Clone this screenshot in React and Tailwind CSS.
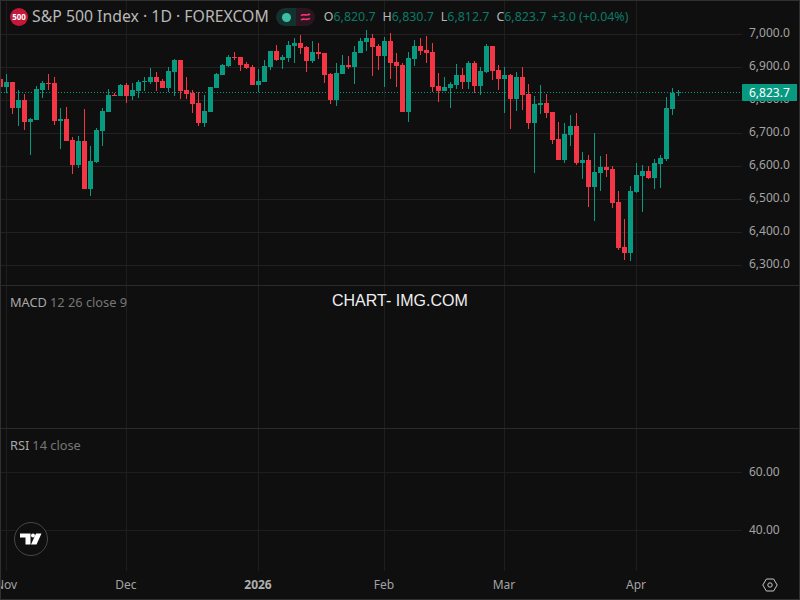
import React from "react";

const G = "#089981";
const R = "#f23645";

// candles in 1/3 px, read off the chart: [color, wickTop, bodyTop, bodyBottom, wickBottom]
const candles = [
  [R, 237, 237, 261, 261], [G, 222, 246, 261, 278], [R, 246, 246, 324, 342], [G, 270, 300, 324, 378],
  [R, 282, 300, 366, 390], [G, 354, 358, 366, 465], [G, 258, 267, 360, 360], [G, 243, 249, 270, 294],
  [R, 222, 249, 252, 270], [R, 231, 249, 363, 375], [G, 324, 357, 362, 447], [R, 321, 357, 423, 423],
  [R, 411, 420, 495, 522], [G, 408, 423, 495, 504], [R, 327, 423, 567, 567], [G, 438, 483, 567, 588],
  [G, 384, 390, 486, 489], [G, 324, 333, 393, 438], [G, 267, 285, 336, 336], [R, 279, 284, 287, 288],
  [G, 252, 255, 288, 288], [R, 249, 255, 288, 309], [G, 249, 270, 288, 300], [G, 240, 246, 273, 294],
  [G, 231, 243, 246, 273], [G, 204, 231, 246, 252], [R, 216, 231, 246, 273], [R, 237, 243, 264, 264],
  [G, 201, 213, 264, 276], [G, 177, 180, 216, 288], [R, 180, 180, 273, 297], [R, 231, 270, 282, 297],
  [R, 270, 279, 312, 339], [R, 276, 309, 369, 378], [G, 285, 333, 369, 381], [G, 261, 261, 336, 336],
  [G, 219, 222, 264, 264], [G, 192, 195, 225, 225], [G, 165, 171, 198, 201], [R, 156, 171, 174, 180],
  [R, 171, 171, 195, 213], [R, 186, 192, 204, 207], [R, 195, 201, 255, 255], [G, 207, 243, 255, 276],
  [G, 180, 198, 246, 246], [G, 153, 153, 201, 210], [R, 135, 153, 180, 183], [G, 165, 171, 180, 207],
  [G, 123, 135, 174, 186], [G, 114, 129, 138, 189], [R, 105, 129, 144, 162], [R, 138, 141, 183, 216],
  [G, 123, 156, 183, 189], [R, 129, 156, 162, 177], [R, 159, 159, 225, 249], [R, 219, 222, 300, 312],
  [G, 189, 219, 300, 318], [G, 165, 195, 222, 222], [R, 168, 195, 201, 207], [G, 138, 156, 201, 252],
  [G, 114, 123, 159, 159], [G, 90, 114, 126, 153], [R, 102, 114, 141, 228], [R, 132, 138, 168, 210],
  [G, 111, 123, 168, 261], [R, 99, 123, 189, 237], [R, 159, 186, 198, 261], [R, 189, 195, 336, 336],
  [G, 156, 174, 336, 366], [G, 120, 138, 177, 198], [R, 114, 138, 153, 165], [R, 108, 150, 159, 189],
  [R, 129, 156, 261, 276], [R, 219, 258, 273, 306], [G, 231, 261, 273, 274], [G, 246, 252, 264, 324],
  [G, 192, 225, 255, 267], [R, 204, 225, 246, 267], [G, 183, 189, 246, 267], [R, 183, 189, 258, 279],
  [G, 201, 213, 258, 285], [G, 132, 138, 216, 219], [R, 138, 138, 213, 240], [R, 195, 210, 237, 270],
  [G, 201, 225, 237, 339], [R, 222, 225, 297, 387], [G, 216, 231, 297, 333], [R, 200, 231, 285, 330],
  [R, 252, 282, 369, 387], [G, 288, 312, 369, 519], [G, 255, 309, 315, 342], [R, 282, 309, 339, 354],
  [R, 336, 336, 420, 432], [R, 366, 417, 480, 480], [G, 369, 402, 480, 489], [G, 345, 378, 405, 438],
  [R, 339, 378, 489, 495], [G, 456, 480, 489, 537], [R, 465, 480, 561, 621], [G, 399, 516, 561, 663],
  [G, 468, 501, 519, 573], [R, 462, 501, 510, 531], [R, 498, 507, 609, 624], [R, 573, 606, 744, 750],
  [R, 657, 741, 759, 780], [G, 558, 573, 759, 783], [G, 489, 525, 576, 579], [G, 495, 513, 528, 636],
  [R, 498, 513, 534, 537], [G, 477, 489, 534, 567], [G, 465, 474, 492, 564], [G, 291, 324, 477, 483],
  [G, 264, 279, 327, 345], [G, 270, 276, 279, 288],
];

const monthLines = [6, 126, 258, 384, 504, 636];
const priceLines = [34, 67, 100, 133, 166, 199, 232, 265];
const priceLabels = ["7,000.0", "6,900.0", "6,800.0", "6,700.0", "6,600.0", "6,500.0", "6,400.0", "6,300.0"];

const MonthGrid = ({ top, height }) =>
  monthLines.map((x) => (
    <rect key={x} x={x} y={top} width="1" height={height} fill="#1e1e1e" />
  ));

const App = () => {
  return (
    <div className="w-[800px] h-[600px] bg-[#0f0f0f] border border-[#303030] flex flex-col overflow-hidden font-['Noto_Sans',sans-serif] text-[12px] text-[#a3a3a3]">
      {/* Price pane */}
      <div className="h-[285px] shrink-0 flex border-b border-[#2a2a2a] relative">
        <svg className="w-[741px] h-[284px] shrink-0" viewBox="1 1 741 284" shapeRendering="crispEdges">
          <MonthGrid top={1} height={284} />
          {priceLines.map((y) => (
            <rect key={y} x="1" y={y} width="741" height="1" fill="#212121" />
          ))}
          <line x1="1" y1="92.5" x2="742" y2="92.5" stroke={G} strokeDasharray="1 2" />
          {candles.map((c, i) => (
            <g key={i} fill={c[0]}>
              <rect x={6 * i} y={c[1] / 3} width="1" height={(c[4] - c[1]) / 3} />
              <rect x={6 * i - 2} y={c[2] / 3} width="5" height={(c[3] - c[2]) / 3} />
            </g>
          ))}
        </svg>
        <div className="flex-1 flex flex-col pt-[15px] pl-[7px]">
          {priceLabels.map((label) => (
            <div key={label} className="h-[33px] shrink-0 flex items-center leading-none">
              {label}
            </div>
          ))}
        </div>

        {/* Legend */}
        <div className="absolute left-[9px] top-[7px] h-[18px] flex items-center whitespace-nowrap">
          <div className="w-[18px] h-[18px] rounded-full bg-[#c4173a] flex items-center justify-center text-[8px] font-bold text-white leading-none">
            500
          </div>
          <div className="ml-[4px] text-[15.8px] leading-none text-[#b8b8b8]">S&amp;P 500 Index · 1D · FOREXCOM</div>
          <div className="ml-[7px] flex h-[18px] w-[39px] rounded-full overflow-hidden">
            <div className="w-[20px] bg-[#13322d] flex items-center justify-center pl-[1px]">
              <div className="w-[9px] h-[9px] rounded-full bg-[#3dbfa5]" />
            </div>
            <div className="w-[19px] bg-[#2a1620] flex items-center justify-center">
              <svg width="11" height="10" viewBox="0 0 11 10" fill="none" stroke="#f7356f" strokeWidth="1.6">
                <path d="M1 3.6 C3.5 1.2 6.5 4.6 10 2" />
                <path d="M1 8 C3.5 5.6 6.5 9 10 6.4" />
              </svg>
            </div>
          </div>
          <div className="ml-[9px] flex items-center text-[12.4px] leading-none text-[#0b7a68]">
            <span className="text-[#b8b8b8]">O</span>
            <span>6,820.7</span>
            <span className="ml-[7px] text-[#b8b8b8]">H</span>
            <span>6,830.7</span>
            <span className="ml-[7px] text-[#b8b8b8]">L</span>
            <span>6,812.7</span>
            <span className="ml-[7px] text-[#b8b8b8]">C</span>
            <span>6,823.7</span>
            <span className="ml-[5px]">+3.0</span>
            <span className="ml-[3px]">(+0.04%)</span>
          </div>
        </div>

        {/* Last price tag */}
        <div className="absolute left-[741px] top-[83px] w-[55px] h-[17px] bg-[#089981] rounded-l-[1px] flex items-center pl-[7px] text-white leading-none">
          6,823.7
        </div>
      </div>

      {/* MACD pane */}
      <div className="h-[143px] shrink-0 border-b border-[#2a2a2a] relative">
        <svg className="w-[741px] h-[142px]" viewBox="1 286 741 142" shapeRendering="crispEdges">
          <MonthGrid top={286} height={142} />
        </svg>
        <div className="absolute left-[9px] top-[8px] flex gap-[3px] text-[12.8px] leading-[16px] text-[#767676]">
          <span className="text-[#a8a8a8]">MACD</span>
          <span>12 26 close 9</span>
        </div>
        <div className="absolute left-[331px] top-[6px] font-['Liberation_Sans',sans-serif] text-[16px] leading-[18px] text-[#eeeeee]">
          CHART- IMG.COM
        </div>
      </div>

      {/* RSI pane */}
      <div className="h-[142px] shrink-0 flex relative">
        <svg className="w-[741px] h-[142px] shrink-0" viewBox="1 429 741 142" shapeRendering="crispEdges">
          <MonthGrid top={429} height={142} />
          <rect x="1" y="472" width="741" height="1" fill="#1e1e1e" />
          <rect x="1" y="530" width="741" height="1" fill="#1e1e1e" />
        </svg>
        <div className="flex-1 flex flex-col pt-[14px] pl-[7px]">
          <div className="h-[58px] flex items-center leading-none">60.00</div>
          <div className="h-[58px] flex items-center leading-none">40.00</div>
        </div>
        <div className="absolute left-[9px] top-[8px] flex gap-[3px] text-[12.8px] leading-[16px] text-[#767676]">
          <span className="text-[#a8a8a8]">RSI</span>
          <span>14 close</span>
        </div>
        <div className="absolute left-[13px] top-[93px] w-[34px] h-[34px] rounded-full border border-[#474747] bg-[#0f0f0f] flex items-center justify-center">
          <svg width="22" height="12" viewBox="0 0 22 12" fill="#ffffff">
            <path d="M0 0.5 H10.5 V11.5 H5.5 V4.5 H0 Z" />
            <circle cx="13" cy="2.5" r="2" />
            <path d="M16 0.5 H21.5 L16.5 11.5 H11 Z" />
          </svg>
        </div>
      </div>

      {/* Time axis */}
      <div className="flex-1 flex items-center text-[12px] leading-none relative">
        <span className="w-[60px] shrink-0 text-center ml-[-25px]">Nov</span>
        <span className="w-[60px] shrink-0 text-center ml-[60px]">Dec</span>
        <span className="w-[60px] shrink-0 text-center ml-[72px] font-bold text-[#b0b0b0]">2026</span>
        <span className="w-[60px] shrink-0 text-center ml-[66px]">Feb</span>
        <span className="w-[60px] shrink-0 text-center ml-[60px]">Mar</span>
        <span className="w-[60px] shrink-0 text-center ml-[72px]">Apr</span>
        <svg className="ml-[96px] shrink-0" width="16" height="14" viewBox="0 0 16 14" fill="none" stroke="#c8c8c8" strokeWidth="1">
          <path d="M0.8 7 L4.4 1 H11.6 L15.2 7 L11.6 13 H4.4 Z" />
          <circle cx="8" cy="7" r="2.2" />
        </svg>
      </div>
    </div>
  );
};

export default App;
